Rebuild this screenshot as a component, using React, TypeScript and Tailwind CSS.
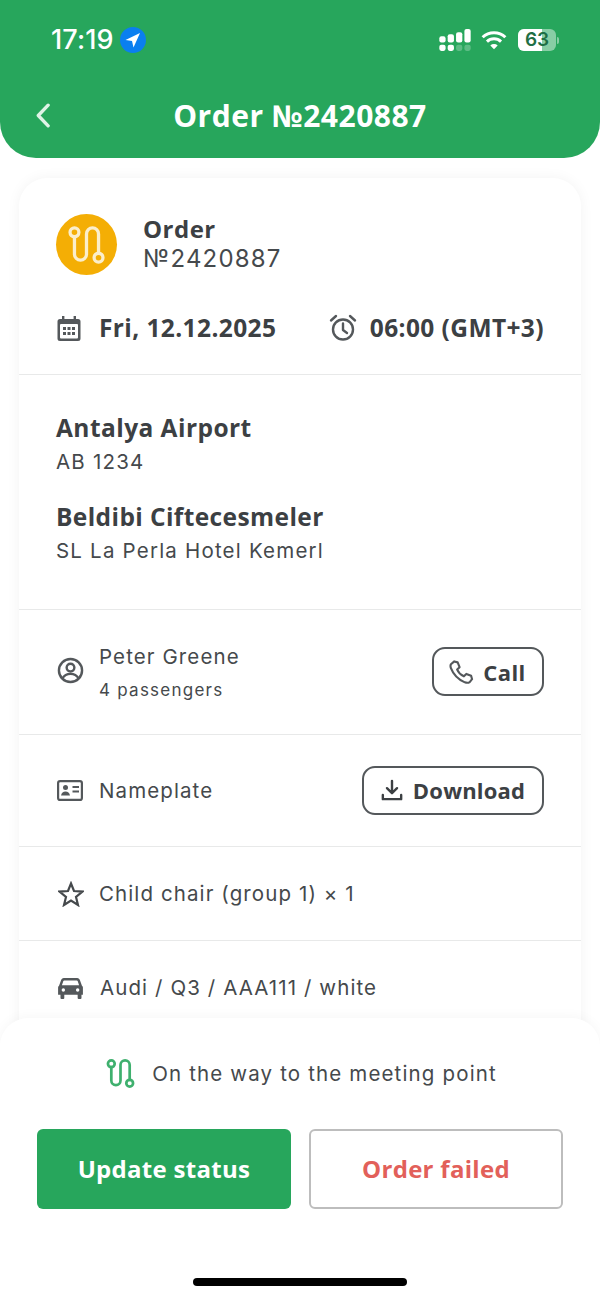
import React from "react";

const OS = "font-['Open_Sans',sans-serif]";
const IN = "font-['Inter',sans-serif]";

function RouteIcon({ className, color, sw = 2 }: { className?: string; color: string; sw?: number }) {
  return (
    <svg viewBox="1.5 1 29 30" className={className} fill="none" stroke={color} strokeWidth={sw} strokeLinecap="round">
      <circle cx="6.5" cy="6" r="3.5" />
      <circle cx="25.5" cy="26" r="3.5" />
      <path d="M6.5 9.5V23.25a4.75 4.75 0 0 0 9.5 0V7.25a4.75 4.75 0 0 1 9.500 0V22.500" />
    </svg>
  );
}

function Row({ h, children, border = true }: { h: string; children: React.ReactNode; border?: boolean }) {
  return (
    <div className={`${h} ${border ? "border-b" : ""} border-[#e8e9e9] px-[37px] flex items-center`}>
      {children}
    </div>
  );
}

export default function App() {
  return (
    <div className="relative w-[600px] h-[1298px] overflow-hidden bg-white">
      <header className="h-[158px] bg-[#27a65c] rounded-b-[36px] text-white">
        <div className="flex items-center justify-between pt-[26px] pl-[51px] pr-[41px] h-[54px]">
          <div className="flex items-center gap-[6px]">
            <span className={`${IN} text-[27px] leading-[28px] font-medium tracking-[0.1px]`}>17:19</span>
            <svg viewBox="0 0 26 26" className="w-[26px] h-[26px]">
              <circle cx="13" cy="13" r="13" fill="#0a7ff0" />
              <path d="M20 6 L5.500 13 L12 14 L13.500 20.500 Z" fill="#fff" />
            </svg>
          </div>
          <div className="flex items-center gap-[10px]">
            <svg viewBox="0 0 30 22" className="w-[32px] h-[23px] -ml-[1px]" fill="#fff">
              <rect x="0" y="7" width="6" height="6" rx="2" />
              <rect x="0" y="15" width="6" height="6" rx="2" />
              <rect x="8" y="5" width="6" height="8" rx="2" />
              <rect x="8" y="15" width="6" height="6" rx="2" />
              <rect x="16" y="3" width="6" height="10" rx="2" />
              <rect x="16" y="15" width="6" height="6" rx="2" opacity="0.25" />
              <rect x="24" y="0" width="6" height="13" rx="2" />
              <rect x="24" y="15" width="6" height="6" rx="2" opacity="0.25" />
            </svg>
            <svg viewBox="0 0 24 18" className="w-[26px] h-[20px] mr-[1px]" fill="none" stroke="#fff" strokeWidth="2.800">
              <path d="M1.500 6.500a15 15 0 0 1 21 0" />
              <path d="M5.500 10.500a9.500 9.500 0 0 1 13 0" />
              <path d="M12 17.500 8.600 14a5 5 0 0 1 6.800 0Z" fill="#fff" stroke="none" />
            </svg>
            <div className="flex items-center">
              <div className="relative w-[38px] h-[22px] rounded-[6px] bg-white/45 flex items-center justify-center">
                <div className="absolute left-0 top-0 bottom-0 w-[24px] bg-white rounded-l-[6px]" />
                <span className={`${IN} relative text-[19px] leading-[22px] font-semibold text-[#1f6f45]`}>63</span>
              </div>
              <div className="ml-[1px] w-[2px] h-[7px] rounded-r bg-white/45" />
            </div>
          </div>
        </div>
        <div className="flex items-center justify-center h-[50px] mt-[37px] relative">
          <svg viewBox="0 0 16 26" className="absolute left-[35px] top-[12px] w-[15px] h-[25px]" fill="none" stroke="#dff3e6" strokeWidth="3.600" strokeLinecap="round" strokeLinejoin="round">
            <path d="M14 2 3.500 13 14 24" />
          </svg>
          <h1 className={`${OS} text-[30px] leading-[40px] font-bold tracking-[0.5px]`}>Order №2420887</h1>
        </div>
      </header>

      <main className="mt-[20px] mx-[19px] bg-white rounded-t-[28px] shadow-[0_0_14px_rgba(0,0,0,0.05)]">
        <section className="h-[197px] border-b border-[#e8e9e9] px-[37px] pt-[36px]">
          <div className="flex items-center gap-[26px]">
            <div className="w-[61px] h-[61px] rounded-full bg-[#f4ae05] flex items-center justify-center">
              <RouteIcon className="w-[37px] h-[38px]" color="#fbeecb" sw={2.600} />
            </div>
            <div className="-mt-[2px]">
              <div className={`${OS} text-[24px] leading-[30px] font-bold text-[#3c4043] tracking-[0.5px]`}>Order</div>
              <div className={`${IN} text-[24px] leading-[30px] text-[#45494c] tracking-[1.200px]`}>№2420887</div>
            </div>
          </div>
          <div className="flex items-center justify-between mt-[37px]">
            <div className="flex items-center gap-[17px]">
              <svg viewBox="0 0 26 26" className="w-[26px] h-[26px]" fill="#54585b">
                <path d="M6 1h2.400v3h9.200V1H20v3h2a2.500 2.500 0 0 1 2.500 2.500v17A2.500 2.500 0 0 1 22 26H4a2.500 2.500 0 0 1-2.500-2.500v-17A2.500 2.500 0 0 1 4 4h2Z" />
                <rect x="4" y="9" width="18" height="14.500" rx="1" fill="#fff" />
                <g fill="#54585b">
                  <rect x="7" y="12" width="3" height="3" /><rect x="11.500" y="12" width="3" height="3" /><rect x="16" y="12" width="3" height="3" />
                  <rect x="7" y="17" width="3" height="3" /><rect x="11.500" y="17" width="3" height="3" /><rect x="16" y="17" width="3" height="3" />
                </g>
              </svg>
              <span className={`${OS} text-[24.500px] leading-[32px] font-bold text-[#3c4043] tracking-[0.4px]`}>Fri, 12.12.2025</span>
            </div>
            <div className="flex items-center gap-[13px]">
              <svg viewBox="0 0 28 28" className="w-[28px] h-[28px]" fill="none" stroke="#54585b" strokeWidth="2.400" strokeLinecap="round" strokeLinejoin="round">
                <circle cx="14" cy="15.500" r="10" />
                <path d="M14 9.500v6.500l4 3M2 6.500 7 2M26 6.500 21 2" />
              </svg>
              <span className={`${OS} text-[24.500px] leading-[32px] font-bold text-[#3c4043] tracking-[0.4px]`}>06:00 (GMT+3)</span>
            </div>
          </div>
        </section>

        <section className="h-[235px] border-b border-[#e8e9e9] px-[37px] pt-[36px]">
          <div className={`${OS} text-[24.500px] leading-[34px] font-bold text-[#3c4043] tracking-[0.450px]`}>Antalya Airport</div>
          <div className={`${IN} text-[20.500px] leading-[30px] text-[#45494c] tracking-[1.200px] mt-[2px]`}>AB 1234</div>
          <div className={`${OS} text-[24.500px] leading-[34px] font-bold text-[#3c4043] tracking-[0.400px] mt-[23px]`}>Beldibi Ciftecesmeler</div>
          <div className={`${IN} text-[20.500px] leading-[30px] text-[#45494c] tracking-[1.200px] mt-[2px]`}>SL La Perla Hotel Kemerl</div>
        </section>

        <Row h="h-[125px]">
          <svg viewBox="0 0 28 28" className="w-[27px] h-[27px] mr-[15px] -mt-[3px] ml-[1px]" fill="none" stroke="#54585b" strokeWidth="2.500">
            <circle cx="14" cy="14" r="12" />
            <circle cx="14" cy="11" r="4" />
            <path d="M5.500 22.500c2-3.500 5-5 8.500-5s6.500 1.500 8.500 5" />
          </svg>
          <div className="flex-1 -mt-[1px]">
            <div className={`${IN} text-[20.500px] leading-[30px] text-[#45494c] tracking-[1.100px]`}>Peter Greene</div>
            <div className={`${IN} text-[17px] leading-[24px] mt-[6px] text-[#45494c] tracking-[1.250px]`}>4 passengers</div>
          </div>
          <div className="w-[112px] h-[49px] rounded-[13px] border-2 border-[#54585b] flex items-center justify-center gap-[9px] -mt-[1px]">
            <svg viewBox="0 0 26 26" className="w-[25px] h-[25px] -ml-[1px]" fill="none" stroke="#54585b" strokeWidth="2.200" strokeLinejoin="round">
              <path d="M2 5.500 5.500 2.500 9 3.500l2 5-2.500 2.500c1.500 3.500 3.500 5.500 7 7l2.500-2.500 5 2 1 3.500-2.500 3c-1.500 1-3 1-5 .300C10 21.500 4.500 16 2 9.500c-.6-1.500-.5-3 0-4Z" />
            </svg>
            <span className={`${OS} text-[22px] leading-[30px] font-bold text-[#3c4043] tracking-[0.400px]`}>Call</span>
          </div>
        </Row>

        <Row h="h-[112px]">
          <svg viewBox="0 0 26 22" className="w-[26px] h-[22px] mr-[16px] ml-[1px]" fill="none" stroke="#54585b" strokeWidth="2.200">
            <rect x="1.100" y="1.100" width="23.800" height="18.800" rx="2" />
            <circle cx="8.500" cy="7.500" r="2.500" fill="#54585b" stroke="none" />
            <path d="M4 15.500c.5-2.500 2.200-4 4.500-4s4 1.500 4.500 4Z" fill="#54585b" stroke="none" />
            <path d="M15.500 7h6.500M15.500 11.500h6.500" />
          </svg>
          <div className={`${IN} flex-1 text-[20.500px] leading-[30px] text-[#45494c] tracking-[1.100px]`}>Nameplate</div>
          <div className="w-[182px] h-[49px] rounded-[13px] border-2 border-[#54585b] flex items-center justify-center gap-[10px] -mt-[1px]">
            <svg viewBox="0 0 24 24" className="w-[22px] h-[22px]" fill="none" stroke="#3c4043" strokeWidth="2.600" strokeLinecap="round" strokeLinejoin="round">
              <path d="M12 2v13M6.500 10l5.500 5.500 5.500-5.500M2 17.500V22h20v-4.500" />
            </svg>
            <span className={`${OS} text-[22px] leading-[30px] font-bold text-[#3c4043] tracking-[0.200px]`}>Download</span>
          </div>
        </Row>

        <Row h="h-[94px]">
          <svg viewBox="0 0 26 26" className="w-[26px] h-[26px] mr-[15px] ml-[2px]" fill="none" stroke="#45494c" strokeWidth="2.200" strokeLinejoin="miter">
            <path d="m13 2.500 3 7.500 8.500.6-6.500 5.300 2 8.100L13 19.500 6 24l2-8.100-6.500-5.300L10 10Z" />
          </svg>
          <div className={`${IN} text-[20.500px] leading-[30px] text-[#45494c] tracking-[1.100px]`}>Child chair (group 1) × 1</div>
        </Row>

        <Row h="h-[94px]" border={false}>
          <svg viewBox="0 0 26 22" className="w-[25px] h-[21px] mr-[17px] ml-[2px]" fill="#54585b">
            <path d="M6 0h14c1.500 0 2.500 1 3 2.500L25 8c.7.500 1 1.200 1 2v7.500h-1.500V21a1 1 0 0 1-1 1h-2a1 1 0 0 1-1-1v-3.500H6.500V21a1 1 0 0 1-1 1h-2a1 1 0 0 1-1-1v-3.500H0V10c0-.8.300-1.500 1-2l2-5.500C3.500 1 4.500 0 6 0Z" />
            <path d="M6.500 2.500h13c.5 0 .9.300 1 .7L22 7.500H4l1.500-4.300c.1-.4.500-.7 1-.7Z" fill="#fff" />
            <circle cx="5.500" cy="12.500" r="1.800" fill="#fff" />
            <circle cx="20.500" cy="12.500" r="1.800" fill="#fff" />
          </svg>
          <div className={`${IN} text-[20.500px] leading-[30px] text-[#45494c] tracking-[1.100px]`}>Audi / Q3 / AAA111 / white</div>
        </Row>
      </main>

      <footer className="absolute left-0 right-0 bottom-0 h-[280px] bg-white rounded-t-[28px] shadow-[0_-2px_12px_rgba(0,0,0,0.035)]">
        <div className="flex items-center justify-center gap-[17px] pt-[41px] h-[70px] pl-[3px]">
          <RouteIcon className="w-[29px] h-[29px]" color="#3fb06e" sw={2.800} />
          <span className={`${IN} text-[20.500px] leading-[30px] text-[#45494c] tracking-[1.150px]`}>On the way to the meeting point</span>
        </div>
        <div className="flex gap-[18px] px-[37px] mt-[41px]">
          <button className="w-[254px] h-[80px] rounded-[6px] bg-[#27a65c] text-white flex items-center justify-center">
            <span className={`${OS} text-[24px] font-bold tracking-[0.300px]`}>Update status</span>
          </button>
          <button className="w-[254px] h-[80px] rounded-[6px] border-2 border-[#bdbdbd] bg-white flex items-center justify-center">
            <span className={`${OS} text-[24px] font-bold text-[#e2605a] tracking-[0.300px]`}>Order failed</span>
          </button>
        </div>
        <div className="w-[214px] h-[8px] rounded-full bg-black mx-auto mt-[69px]" />
      </footer>
    </div>
  );
}
